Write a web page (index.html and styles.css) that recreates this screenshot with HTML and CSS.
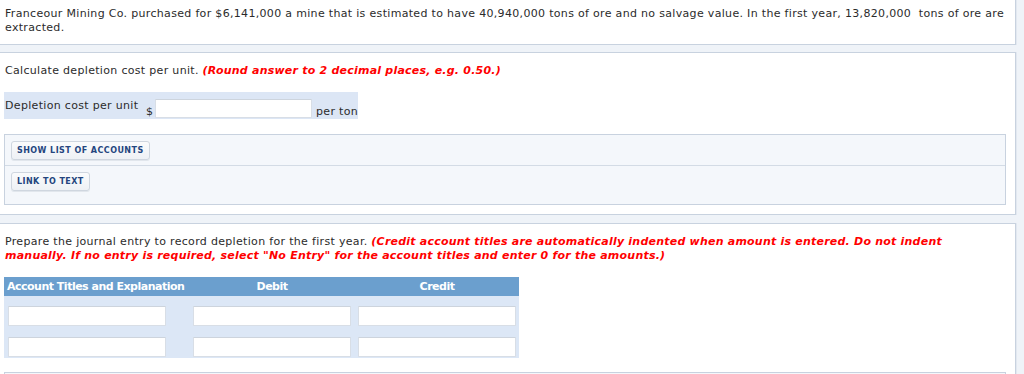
FILE: index.html
```html
<!DOCTYPE html>
<html lang="en">
<head>
<meta charset="utf-8">
<title>Depletion</title>
<link rel="stylesheet" href="styles.css">
</head>
<body>
<div class="panel panel-q">
  <p class="text">Franceour Mining Co. purchased for $6,141,000 a mine that is estimated to have 40,940,000 tons of ore and no salvage value. In the first year, 13,820,000&nbsp; tons of ore are extracted.</p>
</div>

<div class="panel panel-a">
  <p class="text">Calculate depletion cost per unit. <em class="hint">(Round answer to 2 decimal places, e.g. 0.50.)</em></p>
  <div class="answer-row">
    <span class="answer-label">Depletion cost per unit</span>
    <span class="answer-field">
      <span class="cur">$</span>
      <input class="field answer-input" type="text">
      <span class="unit">per ton</span>
    </span>
  </div>
  <div class="tools">
    <div class="tool-row"><button class="btn" type="button">Show List of Accounts</button></div>
    <div class="tool-row tool-row-last"><button class="btn" type="button">Link to Text</button></div>
  </div>
</div>

<div class="panel panel-b">
  <p class="text">Prepare the journal entry to record depletion for the first year. <em class="hint">(Credit account titles are automatically indented when amount is entered. Do not indent manually. If no entry is required, select "No Entry" for the account titles and enter 0 for the amounts.)</em></p>
  <div class="journal">
    <div class="jh jh-first">Account Titles and Explanation</div>
    <div class="jh">Debit</div>
    <div class="jh">Credit</div>
    <div class="jc"><input class="field jf" type="text"></div>
    <div class="jc"><input class="field jf" type="text"></div>
    <div class="jc"><input class="field jf jf-last" type="text"></div>
    <div class="jc"><input class="field jf" type="text"></div>
    <div class="jc"><input class="field jf" type="text"></div>
    <div class="jc"><input class="field jf jf-last" type="text"></div>
  </div>
  <div class="tools tools-next"></div>
</div>
</body>
</html>
```

FILE: styles.css
```css
* { box-sizing: border-box; }
html, body { margin: 0; padding: 0; }
body {
  background: #eff3f8;
  font-family: "DejaVu Sans", Verdana, sans-serif;
  font-size: 11px;
  line-height: 14px;
  letter-spacing: 0.32px;
  color: #2b2b2b;
  width: 1024px;
  height: 374px;
  overflow: hidden;
}
.panel {
  width: 1016px;
  background: #fff;
  border: 1px solid #c8d2df;
  border-left: none;
  box-shadow: 1px 0 0 #e2e8f0;
  padding: 0 9px 9px 4px;
}
.text { margin: 0; padding-left: 1px; }
.hint { color: #ff0000; font-weight: bold; font-style: italic; letter-spacing: 0.22px; }

.panel-q { border-top: none; height: 45px; padding-top: 7px; }
.panel-a { margin-top: 7px; padding-top: 11px; }
.panel-b { margin-top: 8px; padding-top: 11px; height: 200px; }

.answer-row {
  display: inline-flex;
  align-items: flex-start;
  margin-top: 14px;
  height: 27px;
  background: #dce6f5;
  padding: 0 0 0 1px;
  vertical-align: top;
}
.answer-label { width: 141px; padding-top: 7px; white-space: nowrap; }
.answer-field { display: flex; align-items: flex-end; align-self: flex-end; padding-bottom: 1px; }
.cur { width: 9px; line-height: 14px; margin-bottom: -1px; }
.unit { margin-left: 4px; width: 42px; line-height: 14px; margin-bottom: -1px; white-space: nowrap; }
.field {
  display: block;
  background: #fff;
  border: 1px solid #d8dee6;
  border-top-color: #cdd4dd;
  border-radius: 1px;
  margin: 0;
  padding: 0 3px;
  font: inherit;
}
.answer-input { width: 157px; height: 19px; }

.tools {
  margin-top: 15px;
  width: 1002px;
  background: #f4f7fb;
  border: 1px solid #c8d2df;
}
.tool-row { padding: 6px 6px 5px; border-bottom: 1px solid #d3dbe5; }
.tool-row-last { border-bottom: none; padding-bottom: 13px; }
.btn {
  display: block;
  height: 19px;
  padding: 0 5px;
  background: linear-gradient(#fafbfc, #eef1f5);
  border: 1px solid #cfd6df;
  border-radius: 3px;
  box-shadow: 0 1px 0 #e1e6ec;
  font-family: "DejaVu Sans", Verdana, sans-serif;
  font-size: 8px;
  font-weight: bold;
  letter-spacing: 0.45px;
  color: #24457e;
  text-transform: uppercase;
  line-height: 17px;
}

.journal {
  margin-top: 14px;
  width: 515px;
  display: grid;
  grid-template-columns: 185px 166px 164px;
  background: #dce7f6;
  padding-bottom: 1px;
}
.jh {
  background: #6b9fce;
  color: #fff;
  font-weight: bold;
  line-height: 19px;
  height: 19px;
  text-align: center;
  white-space: nowrap;
  letter-spacing: -0.5px;
  margin-bottom: 10px;
}
.jh-first { text-align: left; padding-left: 3px; }
.jc { padding-left: 4px; margin-bottom: 11px; }
.jc:nth-last-child(-n+3) { margin-bottom: 0; }
.jf { width: 158px; height: 20px; }
.jf-last { margin-left: -1px; }

.tools-next { margin-top: 14px; height: 40px; }
```
